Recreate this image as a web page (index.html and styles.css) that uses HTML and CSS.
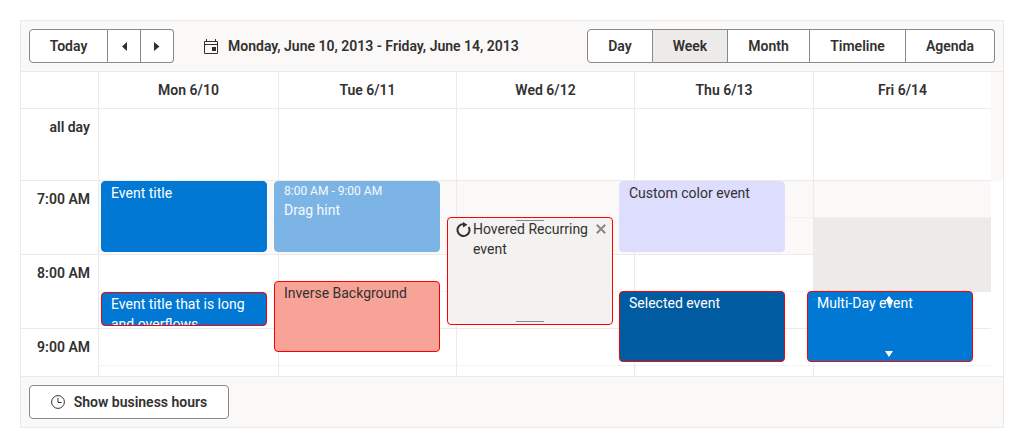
FILE: index.html
```html
<!DOCTYPE html>
<html lang="en">
<head>
<meta charset="utf-8">
<title>Scheduler</title>
<link rel="stylesheet" href="styles.css">
</head>
<body>
<div class="scheduler">
  <div class="toolbar">
    <div class="group">
      <button class="btn today">Today</button>
      <button class="btn arrow" aria-label="Previous"><svg width="6" height="9" viewBox="0 0 6 9"><path d="M6 0V9L1 4.5Z" fill="#323130"/></svg></button>
      <button class="btn arrow" aria-label="Next"><svg width="6" height="9" viewBox="0 0 6 9"><path d="M0 0V9L5.5 4.5Z" fill="#323130"/></svg></button>
    </div>
    <div class="range">
      <svg class="cal" width="14" height="15" viewBox="0 0 14 15"><path d="M0.5 2.5H13.5V14.5H0.5Z M0.5 5.5H13.5" fill="none" stroke="#323130"/><path d="M2.5 0V2.5M11.5 0V2.5" fill="none" stroke="#323130"/><rect x="8" y="8" width="4" height="4" fill="#323130"/></svg>
      <span>Monday, June 10, 2013 - Friday, June 14, 2013</span>
    </div>
    <div class="group views">
      <button class="btn v-day">Day</button>
      <button class="btn v-week active">Week</button>
      <button class="btn v-month">Month</button>
      <button class="btn v-timeline">Timeline</button>
      <button class="btn v-agenda">Agenda</button>
    </div>
  </div>

  <div class="head">
    <div class="hcell c-time"></div>
    <div class="hcell c-a">Mon 6/10</div>
    <div class="hcell c-b">Tue 6/11</div>
    <div class="hcell c-c">Wed 6/12</div>
    <div class="hcell c-d">Thu 6/13</div>
    <div class="hcell c-e">Fri 6/14</div>
    <div class="hcell c-time allday">all day</div>
    <div class="acell c-a"></div>
    <div class="acell c-b"></div>
    <div class="acell c-c"></div>
    <div class="acell c-d"></div>
    <div class="acell c-e"></div>
  </div>

  <div class="body">
    <div class="col times">
      <div class="time">7:00 AM</div>
      <div class="time">8:00 AM</div>
      <div class="time">9:00 AM</div>
    </div>
    <div class="col day">
      <div class="slot off"></div><div class="slot off"></div><div class="slot"></div><div class="slot"></div><div class="slot"></div><div class="slot"></div>
    </div>
    <div class="col day">
      <div class="slot off"></div><div class="slot off"></div><div class="slot"></div><div class="slot"></div><div class="slot"></div><div class="slot"></div>
    </div>
    <div class="col day">
      <div class="slot off"></div><div class="slot off"></div><div class="slot"></div><div class="slot"></div><div class="slot"></div><div class="slot"></div>
    </div>
    <div class="col day">
      <div class="slot off"></div><div class="slot off"></div><div class="slot"></div><div class="slot"></div><div class="slot"></div><div class="slot"></div>
    </div>
    <div class="col day last">
      <div class="slot off"></div><div class="slot busy"></div><div class="slot busy"></div><div class="slot"></div><div class="slot"></div><div class="slot"></div>
    </div>

    <div class="ev ev-title">Event title</div>
    <div class="ev ev-hint"><div class="ev-time">8:00 AM - 9:00 AM</div>Drag hint</div>
    <div class="ev ev-long red">Event title that is long and overflows</div>
    <div class="ev ev-inverse red">Inverse Background</div>
    <div class="ev ev-hover red">
      <span class="handle handle-top"></span>
      <svg class="recur" width="15" height="15" viewBox="0 0 15 15"><path d="M7.5 2A6 6 0 1 0 12.7 5" fill="none" stroke="#323130" stroke-width="2"/><path d="M7 0V5.5L11.5 2.75Z" fill="#323130"/></svg>
      <div class="hover-text">Hovered Recurring event</div>
      <svg class="close" width="10" height="10" viewBox="0 0 10 10"><path d="M0.8 0.8L9.2 9.2M9.2 0.8L0.8 9.2" fill="none" stroke="#8a8886" stroke-width="2"/></svg>
      <span class="handle handle-bottom"></span>
    </div>
    <div class="ev ev-custom">Custom color event</div>
    <div class="ev ev-selected red">Selected event</div>
    <div class="ev ev-multi red">Multi-Day event
      <span class="tri tri-up"></span>
      <span class="tri tri-mid"></span>
      <span class="tri tri-down"></span>
    </div>
  </div>

  <div class="footer">
    <button class="btn hours">
      <svg width="14" height="14" viewBox="0 0 14 14"><circle cx="7" cy="7" r="6.4" fill="none" stroke="#323130"/><path d="M7 3V7.5H10.5" fill="none" stroke="#323130"/></svg>
      <span>Show business hours</span>
    </button>
  </div>
</div>
</body>
</html>
```

FILE: styles.css
```css
* { box-sizing: border-box; }
html, body { margin: 0; padding: 0; background: #fff; }
body { padding: 20px; font: 14px/20px Roboto, "Liberation Sans", sans-serif; color: #323130; }
.scheduler { position: relative; width: 984px; height: 408px; border: 1px solid #edebe9; display: flex; flex-direction: column; }

.toolbar { height: 51px; flex: none; background: #faf9f8; border-bottom: 1px solid #edebe9; padding: 8px; display: flex; align-items: flex-start; }
.group { display: flex; height: 34px; }
.btn { font: 600 14px/20px Roboto, "Liberation Sans", sans-serif; color: #323130; background: #fff; border: 1px solid #8a8886; height: 34px; padding: 0; margin: 0; display: flex; align-items: center; justify-content: center; }
.group .btn + .btn { border-left: 0; }
.group .btn:first-child { border-radius: 4px 0 0 4px; }
.group .btn:last-child { border-radius: 0 4px 4px 0; }
.today { width: 79px; }
.arrow { width: 33px; }
.range { display: flex; align-items: center; height: 34px; margin-left: 30px; font-weight: 600; }
.cal { margin-right: 10px; }
.views { margin-left: auto; }
.v-day { width: 66px; }
.v-week { width: 75px; }
.v-month { width: 82px; }
.v-timeline { width: 96px; }
.v-agenda { width: 89px; }
.btn.active { background: #edebe9; }

.head { flex: none; display: grid; grid-template-columns: 78px 180px 178px 178px 179px 177px 12px; grid-template-rows: 37px 72px; background: #fff; position: relative; }
.head::after { content: ""; grid-column: 7; grid-row: 1 / 3; background: #faf9f8; }
.hcell { grid-row: 1; font-weight: 600; text-align: center; line-height: 36px; border-right: 1px solid #edebe9; border-bottom: 1px solid #edebe9; }
.c-time { grid-column: 1; }
.c-a { grid-column: 2; }
.c-b { grid-column: 3; }
.c-c { grid-column: 4; }
.c-d { grid-column: 5; }
.c-e { grid-column: 6; border-right: 0; }
.allday { grid-row: 2; text-align: right; line-height: 20px; padding: 8px 8px 0 0; }
.acell { grid-row: 2; border-right: 1px solid #edebe9; border-bottom: 1px solid #edebe9; }
.acell.c-e { border-right: 0; }

.body { position: relative; flex: 1; min-height: 0; overflow: hidden; display: grid; grid-template-columns: 78px 180px 178px 178px 179px 177px 12px; }
.col { border-right: 1px solid #edebe9; }
.col.last { border-right: 0; }
.time { height: 74px; border-bottom: 1px solid #edebe9; text-align: right; font-weight: 600; padding: 8px 8px 0 0; }
.slot { height: 37px; border-bottom: 1px dotted #edebe9; }
.slot:nth-child(even) { border-bottom: 1px solid #edebe9; }
.slot.off { background: #faf9f8; }
.slot.busy { background: #edebe9; }

.ev { position: absolute; width: 166px; height: 71px; border-radius: 4px; padding: 1px 9px; border: 1px solid transparent; overflow: hidden; color: #fff; background: #0078d4; }
.red { border-color: #ff0000; }
.ev-title { left: 80px; top: 0; border-color: #0078d4; }
.ev-hint { left: 253px; top: 0; background: #7cb5e5; border-color: #7cb5e5; color: #f6f9fc; }
.ev-time { font-size: 12px; line-height: 17px; }
.ev-long { left: 80px; top: 111px; height: 34px; }
.ev-inverse { left: 253px; top: 100px; background: #f7a398; color: #323130; }
.ev-hover { left: 426px; top: 36px; height: 108px; background: #f3f2f1; color: #323130; overflow: visible; padding-left: 25px; padding-right: 22px; z-index: 1; }
.hover-text { position: relative; }
.ev-custom { left: 598px; top: 0; background: #ddddfd; border-color: #ddddfd; color: #323130; }
.ev-selected { left: 598px; top: 110px; background: #005ba1; }
.ev-multi { left: 786px; top: 110px; }
.handle { position: absolute; left: 68px; width: 28px; height: 1px; background: #8a8886; }
.handle-top { top: 2px; }
.handle-bottom { bottom: 2px; }
.recur { position: absolute; left: 8px; top: 4px; }
.close { position: absolute; right: 6px; top: 6px; }
.tri { position: absolute; left: 77px; width: 0; height: 0; border-left: 4.5px solid transparent; border-right: 4.5px solid transparent; }
.tri-up { top: 4px; border-bottom: 5px solid #fff; }
.tri-mid { top: 9px; left: 78.5px; border-left-width: 3px; border-right-width: 3px; border-top: 4px solid #fff; }
.tri-down { bottom: 4px; border-top: 6px solid #fff; }

.footer { flex: none; height: 51px; background: #faf9f8; border-top: 1px solid #edebe9; padding: 8px; display: flex; align-items: flex-start; }
.hours { width: 200px; border-radius: 4px; gap: 9px; }
```
